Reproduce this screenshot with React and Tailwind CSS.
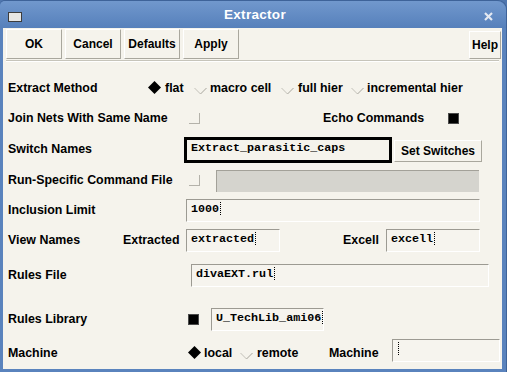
import React from 'react';

const mono = "font-['Liberation_Mono',monospace] font-bold text-[11.7px] text-black leading-[14px]";

const Cursor = () => (
  <span className="inline-block w-[3px] h-[13px] ml-[1px] border-l border-dotted border-black" />
);

const Field = ({ className, children }) => (
  <div className={`h-[23px] shrink-0 flex items-start pl-[4px] pt-[2px] overflow-hidden bg-[#f6f4ee] border border-t-[#9c9a92] border-l-[#9c9a92] border-r-[#ffffff] border-b-[#ffffff] ${className}`}>
    {children}
  </div>
);

const Diamond = () => (
  <svg width="13" height="13" viewBox="0 0 13 13" className="shrink-0">
    <polygon points="6.5,0 13,6.5 6.5,13 0,6.5" fill="#000" />
  </svg>
);

const Vee = () => (
  <svg width="13" height="14" viewBox="0 0 13 14" className="shrink-0">
    <line x1="0.5" y1="7" x2="6.5" y2="13" stroke="#c2c0b8" strokeWidth="1" />
    <line x1="6.5" y1="13" x2="12.5" y2="7" stroke="#a6a49c" strokeWidth="1" />
  </svg>
);

const EmptyBox = () => (
  <span className="block w-[11px] h-[11px] shrink-0 border-r border-b border-[#b4b2aa]" />
);

const BlackBox = () => (
  <span className="block w-[11px] h-[11px] shrink-0 bg-black border border-[#4a4a4a]" />
);

const Button = ({ className, children }) => (
  <div className={`flex items-center justify-center shrink-0 text-[12px] font-bold border border-t-white border-l-white border-r-[#a9a79d] border-b-[#a9a79d] ${className}`}>
    {children}
  </div>
);

export default function App() {
  return (
    <div className="w-[507px] h-[372px] bg-[#4f76ae] font-['Liberation_Sans',Arial,sans-serif] text-black overflow-hidden">
      <div className="w-[507px] h-[372px] flex flex-col bg-[#5a83bd] rounded-tl-[5px] rounded-tr-[9px] border-t border-r border-[#3e6399]">
        {/* title bar */}
        <div className="h-[27px] shrink-0 flex items-center bg-linear-to-b from-[#7198cd] to-[#5680bb] rounded-tl-[5px] rounded-tr-[9px]">
          <span className="ml-[8px] mt-[5px] w-[14px] h-[10px] bg-[#e6e6e4] border border-[#3c3c3c]" />
          <span className="flex-1 text-center text-white font-bold text-[13.5px] tracking-[0.3px] mt-[2px] pl-[4px]">Extractor</span>
          <svg width="9" height="9" viewBox="0 0 9 9" className="mr-[13px] mt-[3px]">
            <line x1="1" y1="1" x2="8" y2="8" stroke="#e4e9f2" strokeWidth="2.2" />
            <line x1="8" y1="1" x2="1" y2="8" stroke="#e4e9f2" strokeWidth="2.2" />
          </svg>
        </div>

        {/* body */}
        <div className="flex-1 ml-[3px] mr-[4px] mb-[3px] bg-[#f5f3ec] flex flex-col text-[12.4px] font-bold">
          {/* buttons */}
          <div className="mt-[1px] h-[30px] flex gap-[3px] pl-[3px] pr-[1px]">
            <Button className="w-[56px] h-[30px]">OK</Button>
            <Button className="w-[56px] h-[30px]">Cancel</Button>
            <Button className="w-[56px] h-[30px]">Defaults</Button>
            <Button className="w-[56px] h-[30px]">Apply</Button>
            <Button className="ml-auto self-end w-[32px] h-[28px]">Help</Button>
          </div>
          <div className="mt-[1px] mx-[3px] h-[2px] border-t border-b border-t-[#c6c4ba] border-b-white" />

          {/* Extract Method */}
          <div className="mt-[11px] h-[30px] flex items-center pl-[5px]">
            <span className="w-[140px] shrink-0">Extract Method</span>
            <div className="w-[46px] flex items-center shrink-0">
              <Diamond />
              <span className="ml-[4px]">flat</span>
            </div>
            <div className="w-[87px] flex items-center shrink-0">
              <Vee />
              <span className="ml-[3px]">macro cell</span>
            </div>
            <div className="w-[70px] flex items-center shrink-0">
              <Vee />
              <span className="ml-[4px]">full hier</span>
            </div>
            <div className="flex items-center shrink-0">
              <Vee />
              <span className="ml-[3px]">incremental hier</span>
            </div>
          </div>

          {/* Join Nets */}
          <div className="h-[30px] flex items-center pl-[5px]">
            <span className="w-[181px] shrink-0">Join Nets With Same Name</span>
            <EmptyBox />
            <span className="ml-[123px] w-[125px] shrink-0">Echo Commands</span>
            <BlackBox />
          </div>

          {/* Switch Names */}
          <div className="h-[33px] flex items-center pl-[5px]">
            <span className="w-[176px] shrink-0">Switch Names</span>
            <div className="w-[208px] h-[26px] shrink-0 border-[3px] border-black flex items-center pl-[4px] pb-[3px]">
              <span className={mono}>Extract_parasitic_caps</span>
            </div>
            <Button className="ml-[2px] mt-[3px] w-[88px] h-[22px] text-[12.4px]">Set Switches</Button>
          </div>

          {/* Run-Specific */}
          <div className="h-[29px] flex items-center pl-[5px]">
            <span className="w-[181px] shrink-0">Run-Specific Command File</span>
            <EmptyBox />
            <div className="ml-[16px] w-[263px] h-[22px] bg-[#d5d4ce] border-t border-l border-[#a3a199]" />
          </div>

          {/* Inclusion Limit */}
          <div className="h-[30px] flex items-center pl-[5px]">
            <span className="w-[178px] shrink-0">Inclusion Limit</span>
            <Field className="w-[294px]">
              <span className={mono}>1000</span>
              <Cursor />
            </Field>
          </div>

          {/* View Names */}
          <div className="h-[30px] flex items-center pl-[5px]">
            <span className="w-[115px] shrink-0">View Names</span>
            <span className="w-[63px] shrink-0">Extracted</span>
            <Field className="w-[94px]">
              <span className={mono}>extracted</span>
              <Cursor />
            </Field>
            <span className="ml-[63px] w-[43px] shrink-0">Excell</span>
            <Field className="w-[94px]">
              <span className={mono}>excell</span>
              <Cursor />
            </Field>
          </div>

          {/* Rules File */}
          <div className="h-[41px] flex items-center pl-[5px]">
            <span className="w-[183px] shrink-0">Rules File</span>
            <Field className="w-[298px]">
              <span className={mono}>divaEXT.rul</span>
              <Cursor />
            </Field>
          </div>

          {/* Rules Library */}
          <div className="h-[43px] pt-[3px] flex items-center pl-[5px]">
            <span className="w-[180px] shrink-0">Rules Library</span>
            <BlackBox />
            <Field className="ml-[12px] w-[113px] pl-[2px]">
              <span className={`${mono} whitespace-nowrap`}>U_TechLib_ami06</span>
              <Cursor />
            </Field>
          </div>

          {/* Machine */}
          <div className="h-[28px] flex items-center pl-[5px]">
            <span className="w-[180px] shrink-0">Machine</span>
            <div className="w-[52px] flex items-center shrink-0">
              <Diamond />
              <span className="ml-[3px]">local</span>
            </div>
            <div className="w-[89px] flex items-center shrink-0">
              <Vee />
              <span className="ml-[4px]">remote</span>
            </div>
            <span className="w-[63px] shrink-0">Machine</span>
            <Field className="w-[108px] mb-[5px] pl-[1px]">
              <Cursor />
            </Field>
          </div>
        </div>
      </div>
    </div>
  );
}
